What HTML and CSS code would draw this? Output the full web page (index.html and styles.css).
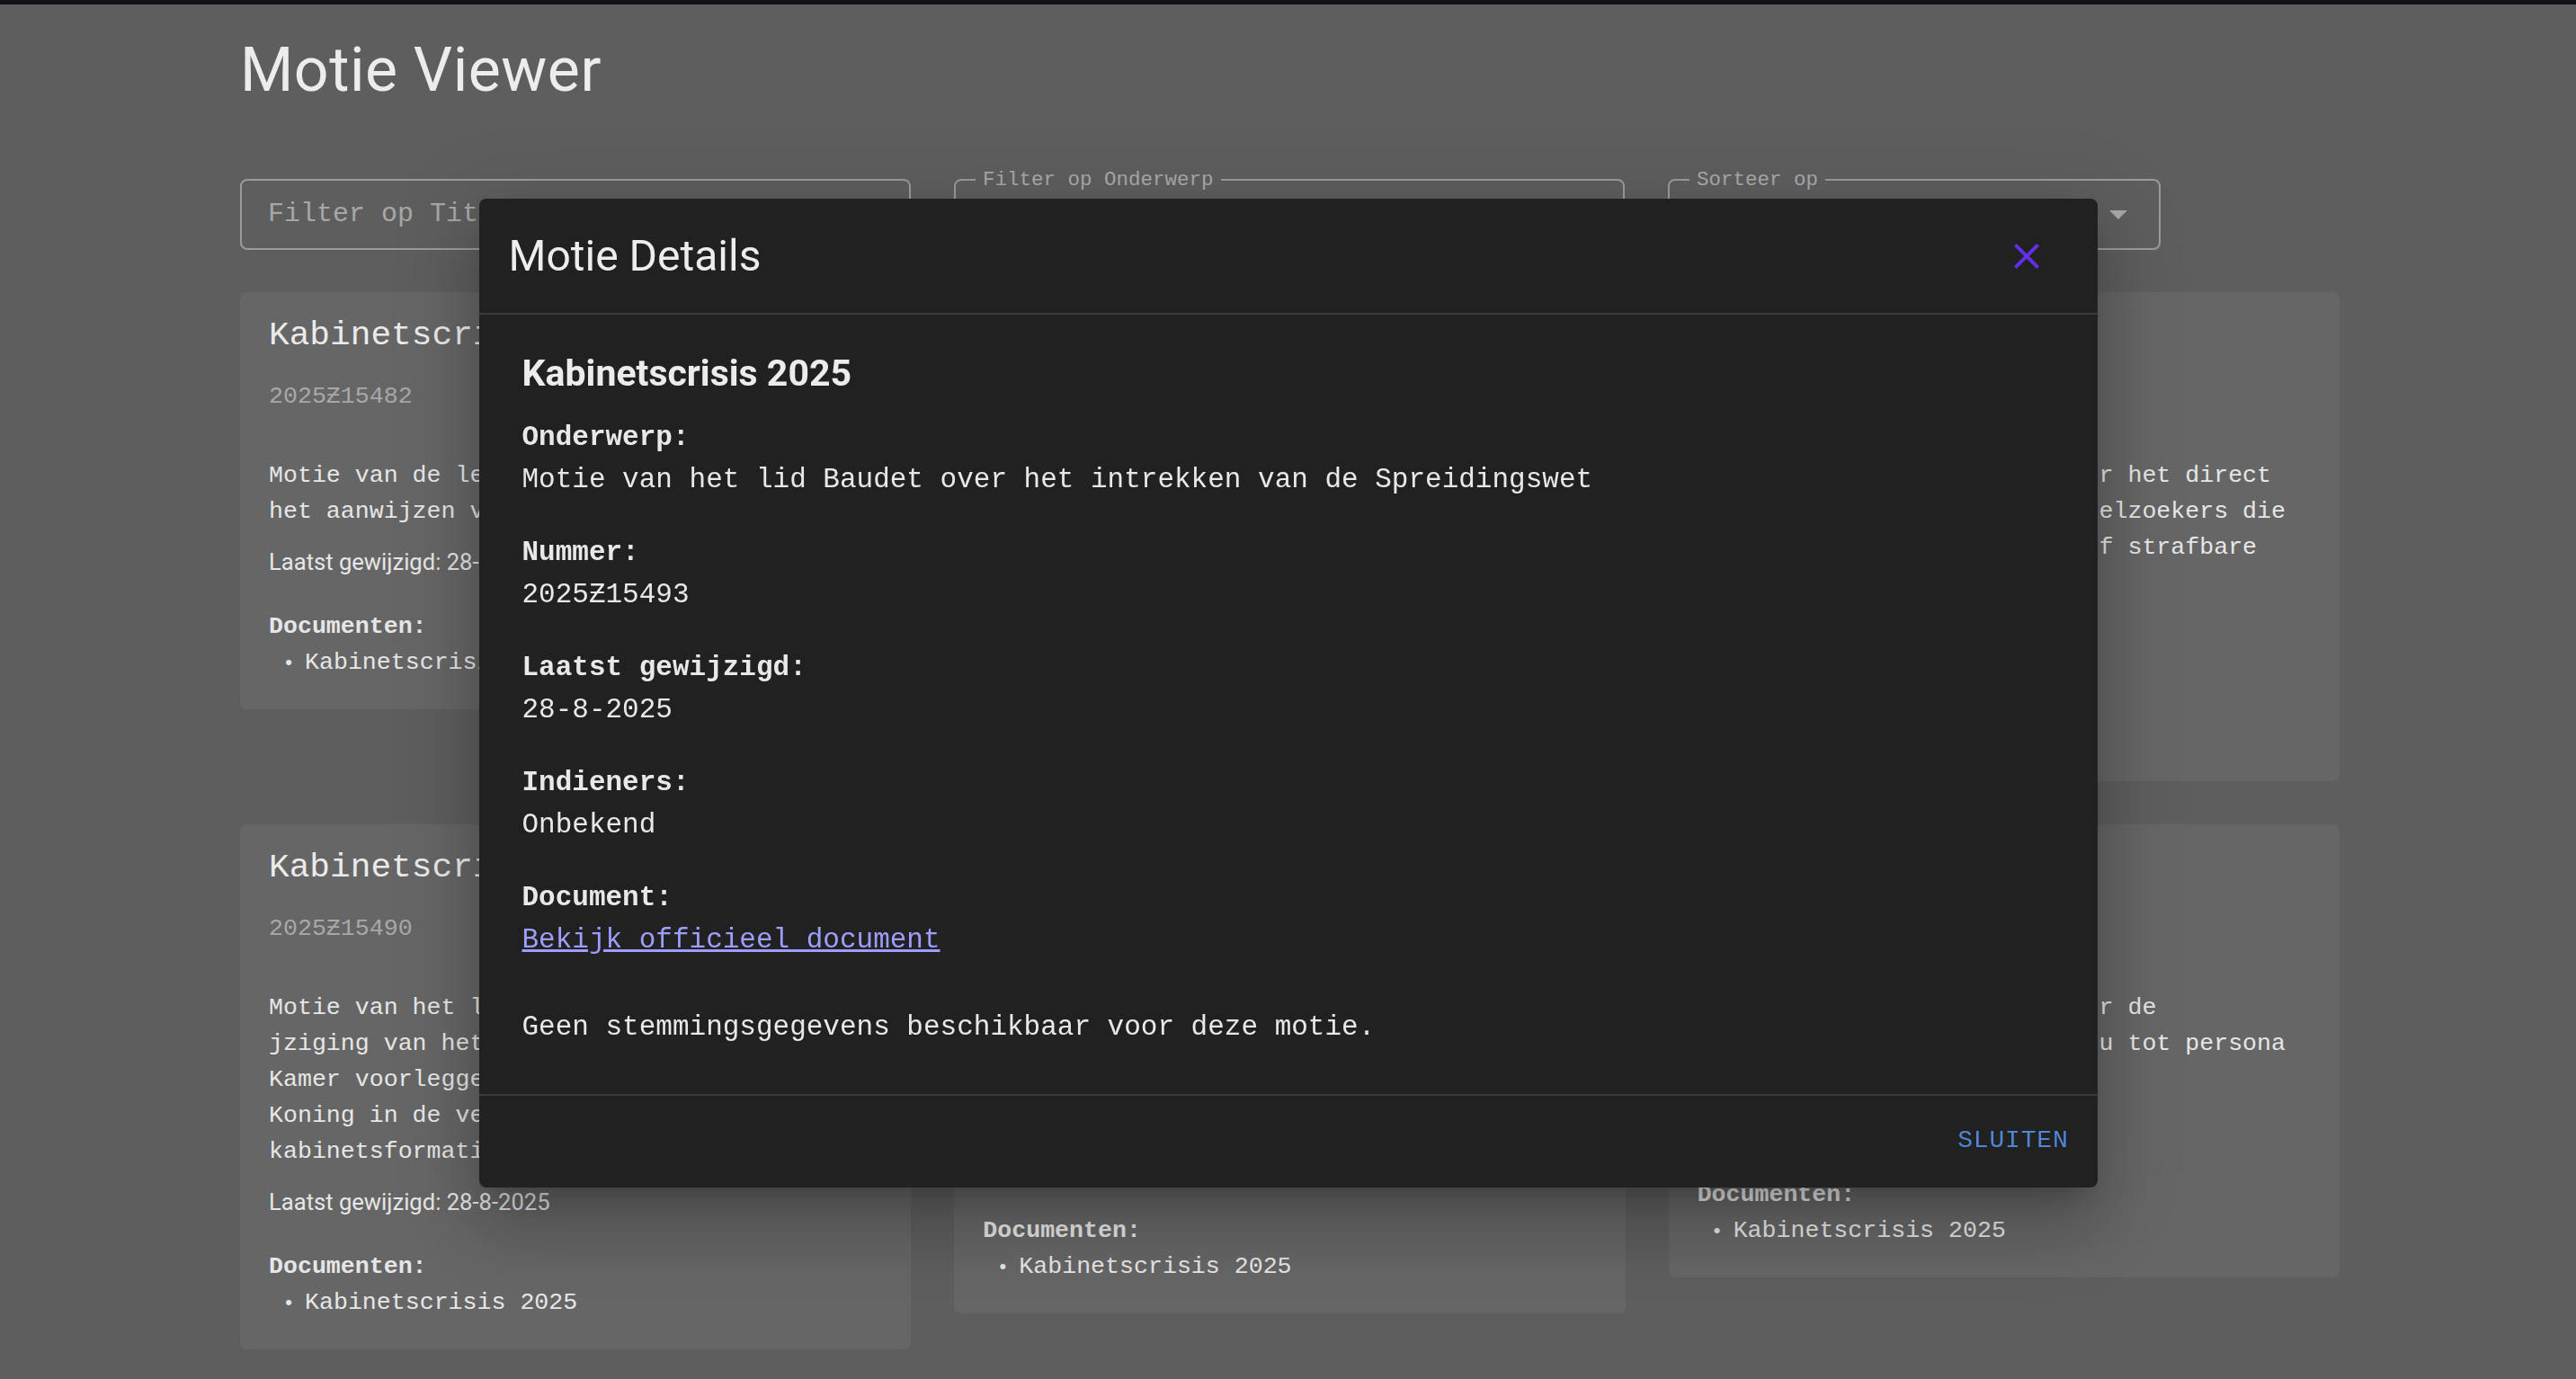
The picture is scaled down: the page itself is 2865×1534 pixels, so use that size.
FILE: index.html
```html
<!DOCTYPE html>
<html lang="nl">
<head>
<meta charset="utf-8">
<title>Motie Viewer</title>
<link rel="stylesheet" href="styles.css">
</head>
<body>
<div class="topbar"></div>
<main class="container">
  <h1 class="page-title">Motie Viewer</h1>

  <div class="filters">
    <fieldset class="field field-plain">
      <legend class="legend-empty"></legend>
      <span class="placeholder">Filter op Titel</span>
    </fieldset>
    <fieldset class="field">
      <legend>Filter op Onderwerp</legend>
      <span class="value"></span>
    </fieldset>
    <fieldset class="field field-select">
      <legend>Sorteer op</legend>
      <span class="value"></span>
      <svg class="arrow" viewBox="0 0 24 24" aria-hidden="true"><path d="M7 10l5 5 5-5z"/></svg>
    </fieldset>
  </div>

  <section class="cards">
    <article class="card">
      <h2 class="card-title">Kabinetscrisis 2025</h2>
      <p class="card-number">2025Ƶ15482</p>
      <p class="card-desc">Motie van de leden Wilders en Bosma over het aanwijzen van een informateur</p>
      <p class="card-date">Laatst gewijzigd: 28-8-2025</p>
      <p class="card-docs-label">Documenten:</p>
      <ul class="card-docs"><li>Kabinetscrisis 2025</li></ul>
    </article>
    <article class="card">
      <h2 class="card-title">Kabinetscrisis 2025</h2>
      <p class="card-number">2025Ƶ15485</p>
      <p class="card-desc">Motie van het lid Jetten over het zo snel mogelijk uitschrijven van nieuwe verkiezingen</p>
      <p class="card-date">Laatst gewijzigd: 28-8-2025</p>
      <p class="card-docs-label">Documenten:</p>
      <ul class="card-docs"><li>Kabinetscrisis 2025</li></ul>
    </article>
    <article class="card">
      <h2 class="card-title">Kabinetscrisis 2025</h2>
      <p class="card-number">2025Ƶ15487</p>
      <p class="card-desc">Motie van het lid Baudet over het direct uitzetten van ongewenste asielzoekers die ernstige overlast bezorgen of strafbare feiten plegen</p>
      <p class="card-date">Laatst gewijzigd: 28-8-2025</p>
      <p class="card-docs-label">Documenten:</p>
      <ul class="card-docs"><li>Kabinetscrisis 2025</li></ul>
    </article>
    <article class="card">
      <h2 class="card-title">Kabinetscrisis 2025</h2>
      <p class="card-number">2025Ƶ15490</p>
      <p class="card-desc">Motie van het lid Omtzigt over een wi<wbr>jziging van het Reglement van Orde aan de Kamer voorleggen over de positie van de Koning in de verschillende fases van de kabinetsformatie</p>
      <p class="card-date">Laatst gewijzigd: 28-8-2025</p>
      <p class="card-docs-label">Documenten:</p>
      <ul class="card-docs"><li>Kabinetscrisis 2025</li></ul>
    </article>
    <article class="card">
      <h2 class="card-title">Kabinetscrisis 2025</h2>
      <p class="card-number">2025Ƶ15491</p>
      <p class="card-desc">Motie van de leden Timmermans en Dassen over het voortzetten van de steun aan Oekraïne door het demissionaire kabinet tot na de verkiezingen</p>
      <p class="card-date">Laatst gewijzigd: 28-8-2025</p>
      <p class="card-docs-label">Documenten:</p>
      <ul class="card-docs"><li>Kabinetscrisis 2025</li></ul>
    </article>
    <article class="card">
      <h2 class="card-title">Kabinetscrisis 2025</h2>
      <p class="card-number">2025Ƶ15492</p>
      <p class="card-desc">Motie van het lid Dassen over de Israëlische regeringsleden nu tot persona non grata te verklaren</p>
      <p class="card-date">Laatst gewijzigd: 28-8-2025</p>
      <p class="card-docs-label">Documenten:</p>
      <ul class="card-docs"><li>Kabinetscrisis 2025</li></ul>
    </article>
  </section>
</main>

<div class="overlay">
  <div class="dialog" role="dialog" aria-labelledby="dlg-title">
    <header class="dialog-header">
      <h2 id="dlg-title" class="dialog-title">Motie Details</h2>
      <button class="close-btn" type="button" aria-label="Sluiten">
        <svg viewBox="0 0 24 24" aria-hidden="true"><path d="M19 6.41 17.59 5 12 10.59 6.41 5 5 6.41 10.59 12 5 17.59 6.41 19 12 13.41 17.59 19 19 17.59 13.41 12z"/></svg>
      </button>
    </header>
    <div class="dialog-content">
      <h3 class="detail-heading">Kabinetscrisis 2025</h3>
      <div class="detail">
        <p class="detail-label">Onderwerp:</p>
        <p class="detail-value">Motie van het lid Baudet over het intrekken van de Spreidingswet</p>
      </div>
      <div class="detail">
        <p class="detail-label">Nummer:</p>
        <p class="detail-value">2025Ƶ15493</p>
      </div>
      <div class="detail">
        <p class="detail-label">Laatst gewijzigd:</p>
        <p class="detail-value">28-8-2025</p>
      </div>
      <div class="detail">
        <p class="detail-label">Indieners:</p>
        <p class="detail-value">Onbekend</p>
      </div>
      <div class="detail">
        <p class="detail-label">Document:</p>
        <p class="detail-value"><a class="doc-link" href="#">Bekijk officieel document</a></p>
      </div>
      <p class="no-votes">Geen stemmingsgegevens beschikbaar voor deze motie.</p>
    </div>
    <footer class="dialog-actions">
      <button class="text-btn" type="button">Sluiten</button>
    </footer>
  </div>
</div>
</body>
</html>
```

FILE: styles.css
```css
* { box-sizing: border-box; }

html, body {
  margin: 0;
  padding: 0;
}

body {
  background: #5e5e5e;
  color: #e6e6e6;
  font-family: "Liberation Mono", "DejaVu Sans Mono", monospace;
  min-height: 1534px;
  overflow: hidden;
}

.topbar {
  height: 5px;
  background: #101217;
}

.container {
  width: 2335px;
  margin-left: 267px;
}

.page-title {
  margin: 31px 0 0;
  font-family: Roboto, "Liberation Sans", sans-serif;
  font-weight: 400;
  font-size: 68px;
  line-height: 84px;
  letter-spacing: 0.5px;
  color: #ececec;
}

/* ---------- filters ---------- */
.filters {
  display: flex;
  gap: 48px;
  margin-top: 67px;
}

.field {
  flex: 0 0 746px;
  margin: 0;
  min-width: 0;
  height: 91px;
  padding: 0 22px 13px;
  border: 2px solid #9b9b9b;
  border-radius: 8px;
  display: flex;
  align-items: center;
  font-size: 30px;
  color: #a7a7a7;
}

.field-select {
  flex-basis: 548px;
  padding-right: 21px;
}

.field legend {
  font-size: 22.5px;
  line-height: 26px;
  padding: 0 8px;
  color: #a9a9a9;
}

.field .legend-empty {
  padding: 0;
  width: 0;
  height: 26px;
}

.field-plain {
  padding-left: 29px;
}

.placeholder,
.value {
  flex: 1;
  line-height: 40px;
  white-space: nowrap;
}

.value { color: #e0e0e0; }

.arrow {
  width: 48px;
  height: 48px;
  fill: #a9a9a9;
  flex: none;
}

/* ---------- cards ---------- */
.cards {
  display: grid;
  grid-template-columns: repeat(3, 1fr);
  gap: 48px;
  align-items: start;
  margin-top: 47px;
}

.card {
  background: #666666;
  border-radius: 8px;
  padding: 32px 32px 30px;
  font-size: 26.6px;
  line-height: 40px;
  color: #e6e6e6;
}

.card p { margin: 0; }

.card-title {
  margin: 0 0 32px;
  font-weight: 400;
  font-size: 37.8px;
  line-height: 32px;
  color: #ebebeb;
  white-space: nowrap;
}

.card .card-number {
  color: #a8a8a8;
  margin-bottom: 48px;
}

.card .card-desc {
  margin-bottom: 18px;
}

.card .card-date {
  font-family: Roboto, "Liberation Sans", sans-serif;
  font-size: 25.6px;
  line-height: 36px;
  margin-bottom: 34px;
}

.card-docs-label {
  font-weight: 700;
}

.card-docs {
  list-style: none;
  margin: 0;
  padding: 0 0 0 40px;
}

.card-docs li::before {
  content: "\2022";
  display: inline-block;
  width: 16px;
  margin-left: -26px;
  margin-right: 10px;
  text-align: center;
  font-size: 22px;
}

/* ---------- dialog ---------- */
.overlay {
  position: fixed;
  inset: 0;
  padding-top: 8px;
  display: flex;
  align-items: center;
  justify-content: center;
}

.dialog {
  width: 1800px;
  background: #212121;
  border-radius: 8px;
  color: #e8e8e8;
  box-shadow:
    0 22px 30px -14px rgba(0, 0, 0, 0.2),
    0 48px 76px 6px rgba(0, 0, 0, 0.14),
    0 18px 92px 16px rgba(0, 0, 0, 0.12);
}

.dialog-header {
  height: 129px;
  display: flex;
  align-items: center;
  justify-content: space-between;
  padding: 0 55px 0 33px;
  border-bottom: 2px solid #3a3a3a;
}

.dialog-title {
  margin: 0;
  font-family: Roboto, "Liberation Sans", sans-serif;
  font-weight: 400;
  font-size: 48px;
  line-height: 64px;
  color: #ededed;
}

.close-btn {
  background: none;
  border: 0;
  padding: 0;
  width: 48px;
  height: 48px;
  cursor: pointer;
}

.close-btn svg {
  width: 48px;
  height: 48px;
  fill: #6130e8;
  display: block;
}

.dialog-content {
  padding: 33px 48px 32px;
  font-size: 31px;
  line-height: 47px;
}

.detail-heading {
  margin: 0 0 16px;
  font-family: Roboto, "Liberation Sans", sans-serif;
  font-weight: 700;
  font-size: 41px;
  line-height: 64px;
  color: #ececec;
}

.detail {
  margin-bottom: 34px;
}

.detail p { margin: 0; }

.detail-label {
  font-weight: 700;
}

.doc-link {
  color: #9e9eff;
  text-decoration: underline;
}

.no-votes {
  margin: 50px 0 19px;
}

.dialog-actions {
  border-top: 2px solid #3a3a3a;
  height: 104px;
  display: flex;
  justify-content: flex-end;
  align-items: center;
  padding: 0 16px 3px;
}

.text-btn {
  background: none;
  border: 0;
  padding: 12px 16px;
  font-family: "Liberation Mono", "DejaVu Sans Mono", monospace;
  font-size: 28px;
  line-height: 49px;
  letter-spacing: 0.8px;
  text-transform: uppercase;
  color: #4f86d8;
  cursor: pointer;
}
```
